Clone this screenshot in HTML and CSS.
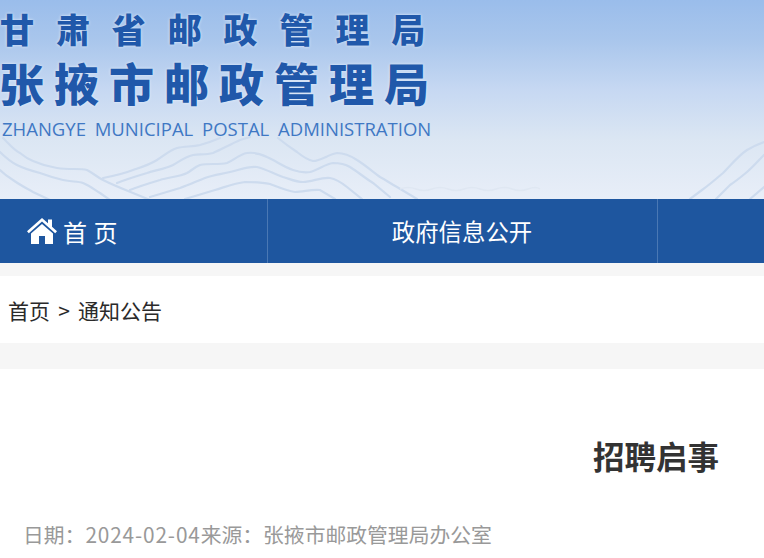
FILE: index.html
```html
<!DOCTYPE html>
<html lang="zh-CN">
<head>
<meta charset="utf-8">
<title>招聘启事</title>
<link rel="stylesheet" href="styles.css">
</head>
<body>
<div class="page">
  <header class="banner">
    <svg class="waves" viewBox="0 0 764 199" width="764" height="199" aria-hidden="true">
      <g class="wave-lines">
        <path d="M3 138 C10 145 14 150 20 153 C26 158 28 159 33 161 C42 165 50 167 57 168 C70 170 80 168 87 170 C93 173 97 177 103 180 C113 185 123 189 133 193 L150 200"/>
        <path d="M0 152 C6 158 11 162 17 165 C25 169 32 171 40 173 C48 176 55 178 63 180 C71 182 78 181 83 183 C90 186 95 190 100 193 L110 200"/>
        <path d="M0 170 C4 174 8 177 13 180 C20 185 26 188 33 192 L50 200"/>
        <path d="M103 178 C113 176 123 174 133 170 C142 167 149 165 157 160 C165 155 170 150 177 148 C185 146 192 147 200 145 C207 143 213 141 220 138"/>
        <path d="M117 183 C127 179 137 176 147 173 C156 170 165 169 173 165 C180 161 185 157 193 155 C200 154 206 155 213 153 C222 149 231 144 240 140 L250 137"/>
        <path d="M130 190 C140 186 150 183 160 180 C169 177 179 177 187 173 C192 170 195 167 200 165 C209 163 218 165 227 163 C234 160 240 154 247 153 C255 152 261 154 267 157 C276 161 284 167 293 170 C299 172 304 173 310 172 C318 170 325 164 333 163 C340 163 345 164 350 167 C358 172 365 178 373 183 L390 197"/>
        <path d="M150 197 C160 194 170 191 180 188 C189 185 197 181 205 178 C213 175 222 174 230 172 C239 170 248 166 257 167 C266 169 274 174 283 177 C290 179 296 182 303 182 C312 182 321 177 330 178 C336 179 342 183 347 187 L362 199"/>
        <path d="M185 199 C195 196 205 193 215 190 C225 187 235 183 245 182 C254 182 262 182 270 184 C278 187 287 191 295 192 C303 192 312 189 320 190 L335 199"/>
        <path d="M278 138 C284 143 291 148 297 152 C302 156 307 160 313 161 C321 161 329 154 337 153 C344 153 351 156 357 160 C365 165 372 171 380 177 C386 180 391 184 397 187 L417 199"/>
        <path d="M764 142 C758 144 752 147 747 150 C738 156 731 165 723 173 C716 179 709 185 702 190 L690 199"/>
        <path d="M764 155 C758 161 753 167 747 172 C741 177 736 181 730 185 L716 199"/>
        <path d="M764 187 L750 199"/>
      </g>
      <path class="wave-faint" d="M400 189 q8 -3 16 0 t16 0 t16 0 t16 0 t16 0 t16 0 t16 0 t16 0 t12 0"/>
    </svg>
    <div class="brand">
      <div class="brand-province">甘肃省邮政管理局</div>
      <div class="brand-city">张掖市邮政管理局</div>
      <div class="brand-en">ZHANGYE MUNICIPAL POSTAL ADMINISTRATION</div>
    </div>
  </header>
  <nav class="nav">
    <a class="nav-item nav-home">
      <svg class="home-icon" viewBox="0 0 30 26" width="30" height="26" aria-hidden="true">
        <path fill="#fff" d="M15 0 L21 5.2 V1.5 H25 V8.7 L30 13.2 L28.2 15.2 L15 3.6 L1.8 15.2 L0 13.2 Z"/>
        <path fill="#fff" d="M15 6 L26 15.6 V26 H18 V18 H12 V26 H4 V15.6 Z"/>
      </svg>
      <span class="home-label">首 页</span>
    </a>
    <a class="nav-item nav-wide">政府信息公开</a>
    <a class="nav-item nav-rest"></a>
  </nav>
  <div class="crumbs">首页 &gt; 通知公告</div>
  <main class="article">
    <h1 class="title">招聘启事</h1>
    <p class="meta">日期：<span class="meta-date">2024-02-04</span>来源：张掖市邮政管理局办公室</p>
  </main>
</div>
</body>
</html>
```

FILE: styles.css
```css
html, body {
  margin: 0;
  padding: 0;
  overflow: hidden;
  height: 558px;
  background: #fff;
}
body {
  font-family: "Noto Sans CJK SC", "Liberation Sans", sans-serif;
}
.page {
  width: 1312px;
}
.banner {
  position: relative;
  height: 199px;
  box-sizing: border-box;
  padding: 8px 0 0 2px;
  background: linear-gradient(180deg, #9abdeb 0%, #a9c6ec 20%, #c6d8f2 45%, #dbe6f3 70%, #e8eef8 100%);
  overflow: hidden;
}
.waves {
  position: absolute;
  left: 0;
  top: 0;
  filter: blur(0.6px);
}
.wave-lines {
  fill: none;
  stroke: #cddbee;
  stroke-width: 2.2;
  stroke-linecap: round;
}
.wave-faint {
  fill: none;
  stroke: #dfe7f2;
  stroke-width: 1.5;
}
.brand {
  position: relative;
  display: flex;
  flex-direction: column;
  color: #2058aa;
  text-shadow: 0 0 3px #e8f0fb;
  font-family: "Noto Sans CJK SC", sans-serif;
  font-weight: 900;
  white-space: nowrap;
}
.brand-province {
  margin-left: -2px;
  font-size: 34px;
  line-height: 42px;
  letter-spacing: 21.9px;
}
.brand-city {
  font-size: 45px;
  line-height: 54px;
  letter-spacing: 10px;
  margin-left: -3px;
  margin-top: 6px;
}
.brand-en {
  font-family: "Open Sans", sans-serif;
  font-weight: 400;
  font-size: 18.5px;
  line-height: 24px;
  color: #3f78c4;
  word-spacing: 4px;
  margin-top: 7px;
  text-shadow: none;
}
.nav {
  display: flex;
  height: 64px;
  background: #1e569f;
  color: #fff;
}
.nav-item {
  display: flex;
  align-items: center;
  justify-content: center;
  box-sizing: border-box;
  border-right: 1px solid #4a78b4;
  font-size: 24px;
}
.nav-home {
  width: 268px;
  justify-content: flex-start;
  padding-left: 27px;
  gap: 6px;
}
.home-label {
  word-spacing: 1px;
}
.nav-wide {
  width: 390px;
  font-size: 23.4px;
  padding-right: 1px;
}
.nav-rest {
  flex: 1;
  border-right: 0;
}
.home-icon {
  flex: none;
}
.crumbs {
  margin-top: 13px;
  height: 67px;
  line-height: 68px;
  padding-left: 8px;
  font-size: 21px;
  font-weight: 400;
  word-spacing: 3.5px;
  color: #2a2a2a;
  border-bottom: 26px solid #f6f6f6;
  box-shadow: 0 -13px 0 #f6f6f6;
}
.article {
  padding: 0 24px;
}
.title {
  margin: 61px 0 0;
  text-align: center;
  font-size: 31.5px;
  line-height: 50px;
  font-weight: 700;
  color: #333;
}
.meta {
  margin: 39px 0 0 -1px;
  font-size: 20.8px;
  font-weight: 400;
  line-height: 30px;
  color: #999;
}
.meta-date {
  letter-spacing: 0.85px;
}
```
